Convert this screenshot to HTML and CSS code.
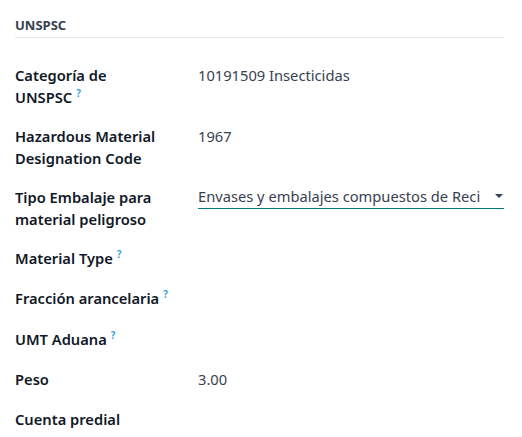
FILE: index.html
```html
<!DOCTYPE html>
<html>
<head>
<meta charset="utf-8">
<link rel="stylesheet" href="styles.css">
</head>
<body>
<div class="group">
  <div class="group-title">UNSPSC</div>
  <div class="fields">
    <div class="row">
      <div class="label">Categoría de UNSPSC<sup class="help">?</sup></div>
      <div class="value">10191509 Insecticidas</div>
    </div>
    <div class="row">
      <div class="label">Hazardous Material Designation Code</div>
      <div class="value">1967</div>
    </div>
    <div class="row">
      <div class="label">Tipo Embalaje para material peligroso</div>
      <div class="value">
        <div class="select"><span class="select-text">Envases y embalajes compuestos de Recipiente de plástico</span><span class="caret"></span></div>
      </div>
    </div>
    <div class="row">
      <div class="label">Material Type<sup class="help">?</sup></div>
      <div class="value"></div>
    </div>
    <div class="row">
      <div class="label">Fracción arancelaria<sup class="help">?</sup></div>
      <div class="value"></div>
    </div>
    <div class="row">
      <div class="label">UMT Aduana<sup class="help">?</sup></div>
      <div class="value"></div>
    </div>
    <div class="row">
      <div class="label">Peso</div>
      <div class="value">3.00</div>
    </div>
    <div class="row">
      <div class="label">Cuenta predial</div>
      <div class="value"></div>
    </div>
  </div>
</div>
</body>
</html>
```
FILE: styles.css
```css
html, body {
  margin: 0;
  padding: 0;
  background: #ffffff;
}
body {
  font-family: "Noto Sans", "Open Sans", sans-serif;
  font-size: 14.7px;
  color: #374151;
}
.group {
  padding: 16px 18px 0 15px;
}
.group-title {
  font-size: 13px;
  font-weight: 700;
  color: #374151;
  line-height: 18px;
  padding-bottom: 3px;
  border-bottom: 1px solid #e5e7eb;
}
.fields {
  padding-top: 26px;
  display: flex;
  flex-direction: column;
  gap: 17px;
}
.row {
  display: grid;
  grid-template-columns: 183px minmax(0, 1fr);
  line-height: 22px;
}
.label {
  font-weight: 600;
  color: #111827;
  padding-right: 27px;
}
.help {
  color: #1a9fd6;
  font-size: 10px;
  font-weight: 600;
  vertical-align: top;
  line-height: 10px;
  margin-left: 4px;
  position: relative;
  top: 2px;
}
.value {
  color: #374151;
  min-width: 0;
  min-height: 23.25px;
}
.select {
  display: flex;
  align-items: center;
  border-bottom: 1px solid #017e84;
  margin-top: -1px;
  padding-bottom: 1px;
}
.select-text {
  flex: 1;
  min-width: 0;
  overflow: hidden;
  white-space: nowrap;
  margin-right: 14px;
}
.caret {
  flex: none;
  width: 0;
  height: 0;
  border-left: 4px solid transparent;
  border-right: 4px solid transparent;
  border-top: 4px solid #374151;
  margin-right: 1px;
}
```
